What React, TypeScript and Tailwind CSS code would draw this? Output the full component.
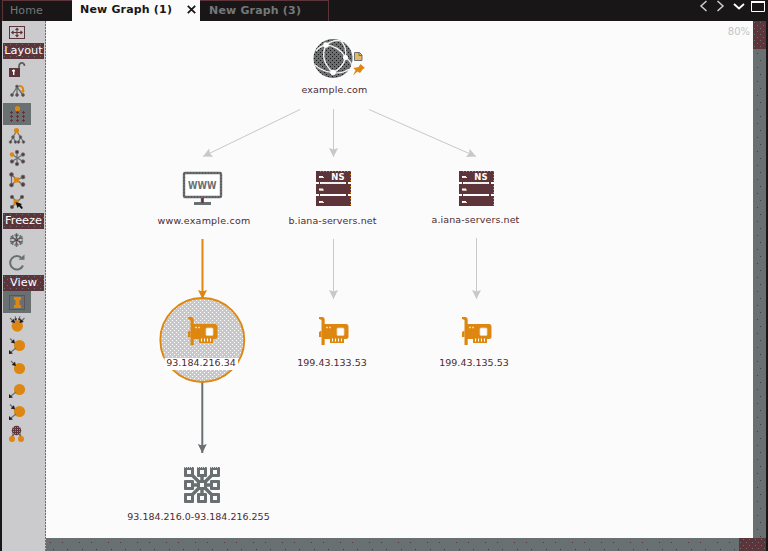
import React from "react";

const GRAY = "#697072";
const MAROON = "#5c3439";
const ORANGE = "#dd8711";
const LIGHT = "#c8c8c8";

type Pt = [number, number];

function Dots({ at, r = 1.7 }: { at: Pt[]; r?: number }) {
  return (
    <g>
      {at.map(([x, y]) => (
        <circle key={`${x}-${y}`} cx={x} cy={y} r={r} fill={MAROON} stroke={GRAY} strokeWidth="0.9" />
      ))}
    </g>
  );
}

function Tool({ children, active = false }: { children: React.ReactNode; active?: boolean }) {
  return (
    <div className={active ? "h-[22px] w-7 shrink-0 bg-[#697072]" : "h-[22px] w-7 shrink-0"}>
      <svg width="28" height="22" viewBox="0 0 28 22" fill="none" className="block">
        {children}
      </svg>
    </div>
  );
}

function Band({ children }: { children: string }) {
  return (
    <div className="relative h-4 w-[41px] shrink-0 overflow-hidden bg-[#5c3439] text-center text-[11.3px] leading-4 text-white">
      <svg className="absolute inset-0" width="41" height="16">
        <rect width="41" height="16" fill="url(#bandDots)" />
      </svg>
      <span className="relative whitespace-nowrap">{children}</span>
    </div>
  );
}

function InArrow({ x, y }: { x: number; y: number }) {
  return (
    <g transform={`translate(${x} ${y})`}>
      <path d="M-4-4L0 0" stroke={GRAY} strokeWidth="1.2" />
      <path d="M1 1L-3.3 0L0-3.3Z" fill="#241719" />
    </g>
  );
}

function OutArrow() {
  return (
    <g>
      <path d="M13 13L8 17" stroke={GRAY} strokeWidth="1.2" />
      <path d="M6 19V15L10 18.5Z" fill="#241719" />
    </g>
  );
}

function Toolbar() {
  return (
    <div className="flex w-[43px] shrink-0 flex-col bg-[#cbcbcd] pl-px">
      <Tool>
        <rect x="6.5" y="5.5" width="15" height="12" stroke={MAROON} />
        <path d="M14 7.5V15.5M9 11.5H19M12.5 9L14 7.3L15.5 9M12.5 14L14 15.7L15.5 14M10.5 10L8.8 11.5L10.5 13M17.5 10L19.2 11.5L17.5 13" stroke={MAROON} strokeWidth="1.1" />
      </Tool>
      <Band>Layout</Band>
      <Tool>
        <path d="M16 10V7.5C16 2.7 21.5 2.7 21.5 7" stroke={GRAY} strokeWidth="1.8" />
        <path d="M16 10V7.5C16 2.7 21.5 2.7 21.5 7" stroke={MAROON} strokeDasharray="1 1" />
        <rect x="6" y="9" width="11" height="9" fill={MAROON} />
        <path d="M9 11.8H12M10.7 10.5V16" stroke="#fff" strokeWidth="1.4" />
      </Tool>
      <Tool>
        <path d="M14 6L9 14M14 6V14M14 6L20 14" stroke={GRAY} strokeWidth="1.3" />
        <path d="M16 5Q21 4.5 20 11" stroke={ORANGE} strokeWidth="2" />
        <path d="M17.5 9.5H22L20 12Z" fill={ORANGE} />
        <Dots at={[[14, 5.5], [9, 14], [14, 14], [20, 14]]} r={1.4} />
      </Tool>
      <Tool active>
        <circle cx="14.5" cy="5.5" r="2.6" fill={ORANGE} />
        {[9, 13, 17].map((y) => (
          <g key={y} fill={MAROON}>
            {[7, 13, 19].map((x) => (
              <path key={x} d={`M${x} ${y}h1v-1h1v1h1v1h-1v1h-1v-1h-1z`} />
            ))}
          </g>
        ))}
      </Tool>
      <Tool>
        <path d="M13 7L10 12L7.5 17M10 12L12.5 17M14 7L17.5 12L15.5 17M17.5 12L20.5 17" stroke={GRAY} strokeWidth="1.2" />
        <Dots at={[[10, 12], [17.5, 12], [7.5, 17], [12.5, 17], [15.5, 17], [20.5, 17]]} r={1.3} />
        <circle cx="13.5" cy="5.5" r="2.6" fill={ORANGE} />
      </Tool>
      <Tool>
        <path d="M14 5V17M9 7.5L20 14.5M9 14.5L20 7.5" stroke={GRAY} strokeWidth="1.2" />
        <Dots at={[[14, 5], [20, 7.5], [20, 14.5], [14, 17], [9, 14.5]]} r={1.7} />
        <circle cx="9" cy="7.5" r="2.2" fill={ORANGE} />
      </Tool>
      <Tool>
        <path d="M8.5 5.5V16M8.5 5.5L14 11L8.5 16M14 11L20 8M14 11L20 16" stroke={GRAY} strokeWidth="1.2" />
        <Dots at={[[8.5, 5.5], [8.5, 16], [20, 8], [20, 15.5]]} r={1.9} />
        <rect x="11" y="8.5" width="5" height="5" fill={ORANGE} />
      </Tool>
      <Tool>
        <path d="M9 6L19 16M19 6L9 16" stroke={GRAY} strokeWidth="1.2" />
        <Dots at={[[9, 6], [19, 6], [9, 16]]} r={1.7} />
        <rect x="10.5" y="8.5" width="5" height="5" fill={ORANGE} />
        <path d="M12.5 11L19 13L17.5 14.2L20 17L18.5 18L16 15.3L14.5 17Z" fill="#111" />
      </Tool>
      <Band>Freeze</Band>
      <Tool>
        <g stroke={GRAY} strokeWidth="1.5">
          <path d="M13.5 4V18M7.5 7.5L19.5 14.5M7.5 14.5L19.5 7.5" />
          <path d="M11.5 5.5L13.5 7.5L15.5 5.5M11.5 16.5L13.5 14.5L15.5 16.5M7 10L10 9L9.5 6M20 10L17 9L17.5 6M7 12L10 13L9.5 16M20 12L17 13L17.5 16" />
        </g>
        <path d="M13.5 6V16M9.5 9L17.5 13M9.5 13L17.5 9" stroke={MAROON} strokeWidth="1" strokeDasharray="1 1.5" />
      </Tool>
      <Tool>
        <path d="M19 7.5A6.7 6.7 0 1 0 20 14.5" stroke={GRAY} strokeWidth="2" />
        <path d="M15.5 8.8H21.5V3.5Z" fill={GRAY} />
      </Tool>
      <div className="h-[2px] shrink-0" />
      <Band>View</Band>
      <Tool active>
        <rect x="6.5" y="4.5" width="15" height="14" stroke={MAROON} strokeDasharray="1 1" />
        <path d="M11 6H18V9H16.5V14H18V17H11V14H12.5V9H11Z" fill={ORANGE} />
      </Tool>
      <Tool>
        <circle cx="14.3" cy="13" r="5.7" fill={ORANGE} />
        <InArrow x={11} y={9} />
        <g transform="translate(28 0) scale(-1 1)"><InArrow x={10.5} y={9} /></g>
        <path d="M12 3L13 6M17 3L16 6" stroke={GRAY} />
        <path d="M11.2 5.5H14L13 8ZM15 5.5H17.8L16 8Z" fill="#241719" />
      </Tool>
      <Tool>
        <circle cx="16.5" cy="10.5" r="5.6" fill={ORANGE} /><InArrow x={11} y={7.5} /><OutArrow />
      </Tool>
      <Tool>
        <circle cx="16.5" cy="11.5" r="5.6" fill={ORANGE} /><InArrow x={12} y={8} />
      </Tool>
      <Tool>
        <circle cx="16.5" cy="10.5" r="5.6" fill={ORANGE} /><OutArrow />
      </Tool>
      <Tool>
        <circle cx="16.5" cy="10.5" r="5.6" fill={ORANGE} /><InArrow x={11} y={7.5} /><OutArrow />
      </Tool>
      <Tool>
        <path d="M11 9L9 15M16 9L18 15" stroke={GRAY} strokeWidth="2" />
        <circle cx="13.5" cy="7.5" r="4.7" fill={MAROON} />
        <circle cx="13.5" cy="7.5" r="4.7" fill="url(#headDots)" />
        <circle cx="9" cy="16" r="3" fill={ORANGE} /><circle cx="18" cy="16" r="3" fill={ORANGE} />
      </Tool>
    </div>
  );
}

function Patterns() {
  return (
    <svg className="absolute h-0 w-0">
      <defs>
        <pattern id="bandDots" width="6" height="6" patternUnits="userSpaceOnUse">
          <path d="M1 1h1v1h-1zM4 4h1v1h-1z" fill={GRAY} />
        </pattern>
        <pattern id="headDots" width="2" height="2" patternUnits="userSpaceOnUse">
          <rect width="1" height="1" fill={ORANGE} />
        </pattern>
        <pattern id="globeDots" width="4" height="4" patternUnits="userSpaceOnUse">
          <rect width="4" height="4" fill={GRAY} />
          <path d="M0 0h1v1h-1zM2 2h1v1h-1z" fill="#191617" />
        </pattern>
        <pattern id="haloDots" width="4" height="4" patternUnits="userSpaceOnUse">
          <rect width="4" height="4" fill="#c8c8ca" />
          <path d="M0 0h1v1h-1zM2 2h1v1h-1z" fill="#fff" />
        </pattern>
        <pattern id="trackDots" width="29" height="14" patternUnits="userSpaceOnUse">
          <path d="M4 4h1v1h-1zM16 4h1v1h-1z" fill={MAROON} />
          <path d="M7 11h1v1h-1zM21 11h1v1h-1z" fill="#42383b" />
        </pattern>
      </defs>
    </svg>
  );
}

function Arrow({ from, to, color, width = 1 }: { from: Pt; to: Pt; color: string; width?: number }) {
  const angle = (Math.atan2(to[1] - from[1], to[0] - from[0]) * 180) / Math.PI;
  return (
    <g>
      <path d={`M${from[0]} ${from[1]}L${to[0]} ${to[1]}`} stroke={color} strokeWidth={width} />
      <path d="M0 0L-9-4.5L-7.5 0L-9 4.5Z" fill={color} transform={`translate(${to[0]} ${to[1]}) rotate(${angle})`} />
    </g>
  );
}

function Server({ x }: { x: number }) {
  return (
    <g transform={`translate(${x} 171)`}>
      <rect width="35" height="35" fill={MAROON} />
      <path d="M4 .5H34.5V34" fill="none" stroke={ORANGE} strokeWidth="1" strokeDasharray="1 2" />
      <path d="M0 12H3M4 12H30M32 12H35M0 24H3M4 24H30M32 24H35" stroke="#fff" strokeWidth="2" />
      <path d="M5 12H29" stroke="#dcd6d2" strokeWidth=".8" />
      <path d="M3 6H7M3 18.5H7M3 31H7" stroke="#fff" strokeWidth="2" />
      <path d="M4 6.5H8M4 19H8M4 31.5H8" stroke="#f2e3c8" strokeWidth="1" />
      <text x="15.3" y="9" fill="#fff" fontFamily="DejaVu Sans, sans-serif" fontWeight="700" fontSize="9.5" textLength="13.2" lengthAdjust="spacingAndGlyphs">NS</text>
    </g>
  );
}

function Card({ x }: { x: number }) {
  return (
    <g transform={`translate(${x} 317)`}>
      <path d="M0 0H3Q5.7 0 5.7 3V7H27Q29.5 7 29.5 10V20Q29.5 22 27 22H25V26H11V22H5.7V28H2.5V3L0 2Z" fill={ORANGE} />
      <path d="M0 15L2.5 13.5V20H0Z" fill={ORANGE} />
      <rect x="18" y="11" width="7" height="7.5" rx="1" fill="#fff" stroke="#eed6af" strokeWidth=".8" />
      <path d="M7 10.5H9M10 10.5H12M8 9.5V11.5M11 9.5V11.5" stroke="#fbe3b9" strokeWidth=".8" />
      <path d="M13.5 21.5V24.5M16.5 21.5V24.5M19.5 21.5V24.5M22.5 21.5V24.5" stroke="#fff" strokeWidth="1.1" />
    </g>
  );
}

function NetBlock() {
  const pos = [0, 13, 26];
  return (
    <g transform="translate(184 467)">
      <path d="M5 5L31 31M31 5L5 31M18 5V31M5 18H31" stroke={GRAY} strokeWidth="3.4" />
      {pos.map((y) => pos.map((x) => (
        <g key={`${x}-${y}`}>
          <rect x={x} y={y} width="10" height="10" rx="1" fill={GRAY} />
          <rect x={x + 3} y={y + 3} width="4" height="4" fill="#fbfbfb" />
        </g>
      )))}
      <path d="M1 .5H9M14 .5H22M27 .5H35" stroke="#fafafa" strokeDasharray="1 1" strokeWidth=".8" />
    </g>
  );
}

function Label({ className, children }: { className: string; children: string }) {
  return (
    <div className={`absolute -translate-x-1/2 whitespace-nowrap text-[9.5px] leading-3 text-[#4e2a2e] ${className}`}>
      {children}
    </div>
  );
}

function Graph() {
  return (
    <div className="relative min-h-0 flex-1 overflow-hidden bg-[#fbfbfb]">
      <svg className="block" width="707" height="517" viewBox="46 21 707 517" fill="none">
        <Arrow from={[300, 109.5]} to={[203, 156.5]} color={LIGHT} />
        <Arrow from={[333.5, 109]} to={[333.5, 157]} color={LIGHT} />
        <Arrow from={[369, 109.5]} to={[476, 156.5]} color={LIGHT} />
        <Arrow from={[333.5, 239]} to={[333.5, 299]} color={LIGHT} />
        <Arrow from={[476.5, 238]} to={[476.5, 299]} color={LIGHT} />
        <Arrow from={[202.3, 382]} to={[202.3, 453]} color={GRAY} width={2} />

        <circle cx="333" cy="58.5" r="19.5" fill="url(#globeDots)" />
        <g stroke="#f0f0f0" strokeWidth="1.4">
          <path d="M316 51Q320 46 326 45Q339 46 345.5 57.5Q351 61 352 66M326 45Q319 60 333 72.5Q343 68 345.5 57.5Q347 47 341 41M326 45Q335 38 343 42M315 65Q323 72 333 72.5Q343 74 349 69" />
        </g>
        <circle cx="326" cy="45" r="2.8" fill="#fff" />
        <circle cx="345.5" cy="57.5" r="2.5" fill="#fff" />
        <circle cx="333" cy="72.5" r="2.8" fill="#fff" />
        <path d="M354.5 52.5H359.5L362 55V60.5H354.5Z" fill="#e8b765" stroke={GRAY} />
        <path d="M359 52.5V55.5H362" stroke={GRAY} />
        <path d="M360.5 64L365 68L363 69L360 73L357.5 71.5L353 75.5L355.5 70.5L353.5 68L358.5 67Z" fill={ORANGE} />

        <rect x="184" y="173" width="37" height="24" rx="1" fill="#fff" stroke={GRAY} strokeWidth="2.4" />
        <rect x="184" y="173" width="37" height="24" stroke={MAROON} strokeWidth=".8" strokeDasharray="1 2" />
        <path d="M202.3 198V204M194 203.5H211" stroke={GRAY} strokeWidth="3" />
        <path d="M202.5 198V203" stroke={MAROON} strokeWidth="2" />
        <text x="188" y="188.5" fill={GRAY} fontFamily="DejaVu Sans, sans-serif" fontWeight="700" fontSize="9.8" textLength="28.5" lengthAdjust="spacingAndGlyphs">WWW</text>

        <Server x={316} />
        <Server x={459} />

        <circle cx="202.3" cy="340" r="42" fill="url(#haloDots)" stroke={ORANGE} strokeWidth="1.8" />
        <rect x="164.5" y="358" width="73.5" height="12" fill="#fff" />
        <Arrow from={[202.5, 239]} to={[202.5, 299]} color={ORANGE} width={2} />
        <Card x={188} />
        <Card x={319} />
        <Card x={462} />
        <NetBlock />
      </svg>
      <Label className="left-[288.5px] top-[63px] tracking-[0.17px]">example.com</Label>
      <Label className="left-[158px] top-[194px] tracking-[0.22px]">www.example.com</Label>
      <Label className="left-[286.5px] top-[194px] tracking-[0.09px]">b.iana-servers.net</Label>
      <Label className="left-[429.5px] top-[193px] tracking-[0.09px]">a.iana-servers.net</Label>
      <Label className="left-[155px] top-[336px]">93.184.216.34</Label>
      <Label className="left-[286px] top-[336px]">199.43.133.53</Label>
      <Label className="left-[428px] top-[336px]">199.43.135.53</Label>
      <Label className="left-[152.5px] top-[490px]">93.184.216.0-93.184.216.255</Label>
      <div className="absolute right-[3px] top-[5px] text-[10px] leading-3 text-[#c4c4c4]">80%</div>
    </div>
  );
}

export default function App() {
  return (
    <div className="flex h-[551px] w-[768px] flex-col overflow-hidden bg-[#191617] font-['DejaVu_Sans',sans-serif]">
      <Patterns />
      <header className="flex h-[21px] shrink-0 pl-[2px] text-[11px] leading-[20px] text-[#747879]">
        <div className="w-[70px] shrink-0 border-l border-t border-[#5c3439] pl-[7px] tracking-[0.1px]">Home</div>
        <div className="flex w-32 shrink-0 items-center justify-between bg-[#fbfbfb] pl-2 pr-1 font-bold tracking-[0.18px] text-[#191617]">
          <span className="-mt-[2px]">New Graph (1)</span>
          <svg width="9" height="9" viewBox="0 0 9 9" className="-mt-[3px]">
            <path d="M.8.8L8.2 8.2M8.2.8L.8 8.2" stroke="#191617" strokeWidth="1.8" />
          </svg>
        </div>
        <div className="w-[129px] shrink-0 border-r border-t border-[#5c3439] pl-[9px] font-bold tracking-[0.18px]">New Graph (3)</div>
        <svg className="ml-auto" width="70" height="21" viewBox="698 0 70 21" fill="none">
          <path d="M706.5 1L701 6L706.5 11M717.5 1L723 6L717.5 11" stroke="#d0cdce" strokeWidth="1.5" />
          <path d="M734 4L739 8.5L744 4" stroke="#fff" strokeWidth="1.8" />
          <path d="M751.5 1.5H764.5V11.5H751.5Z" stroke="#fff" />
          <path d="M751 2H765" stroke="#fff" strokeWidth="2" />
        </svg>
      </header>
      <div className="flex min-h-0 flex-1 pl-[2px] pr-[2px]">
        <Toolbar />
        <div className="w-px shrink-0 bg-[repeating-linear-gradient(to_bottom,#697072_0_2px,#cbcbcd_2px_3px)]" />
        <main className="flex min-w-0 flex-1 flex-col">
          <div className="flex min-h-0 flex-1">
            <Graph />
            <div className="flex w-[13px] shrink-0 flex-col bg-[#697072]">
              <svg width="13" height="517" className="block">
                <rect width="13" height="517" fill="url(#trackDots)" />
                <rect width="13" height="28" fill={MAROON} />
                <rect width="13" height="28" fill="url(#bandDots)" />
              </svg>
            </div>
          </div>
          <div className="flex h-[13px] shrink-0 bg-[#697072]">
            <svg width="720" height="13" className="block">
              <rect width="693" height="13" fill="url(#trackDots)" />
              <rect x="693" width="27" height="13" fill={MAROON} />
              <rect x="693" width="27" height="13" fill="url(#bandDots)" />
            </svg>
          </div>
        </main>
      </div>
    </div>
  );
}
